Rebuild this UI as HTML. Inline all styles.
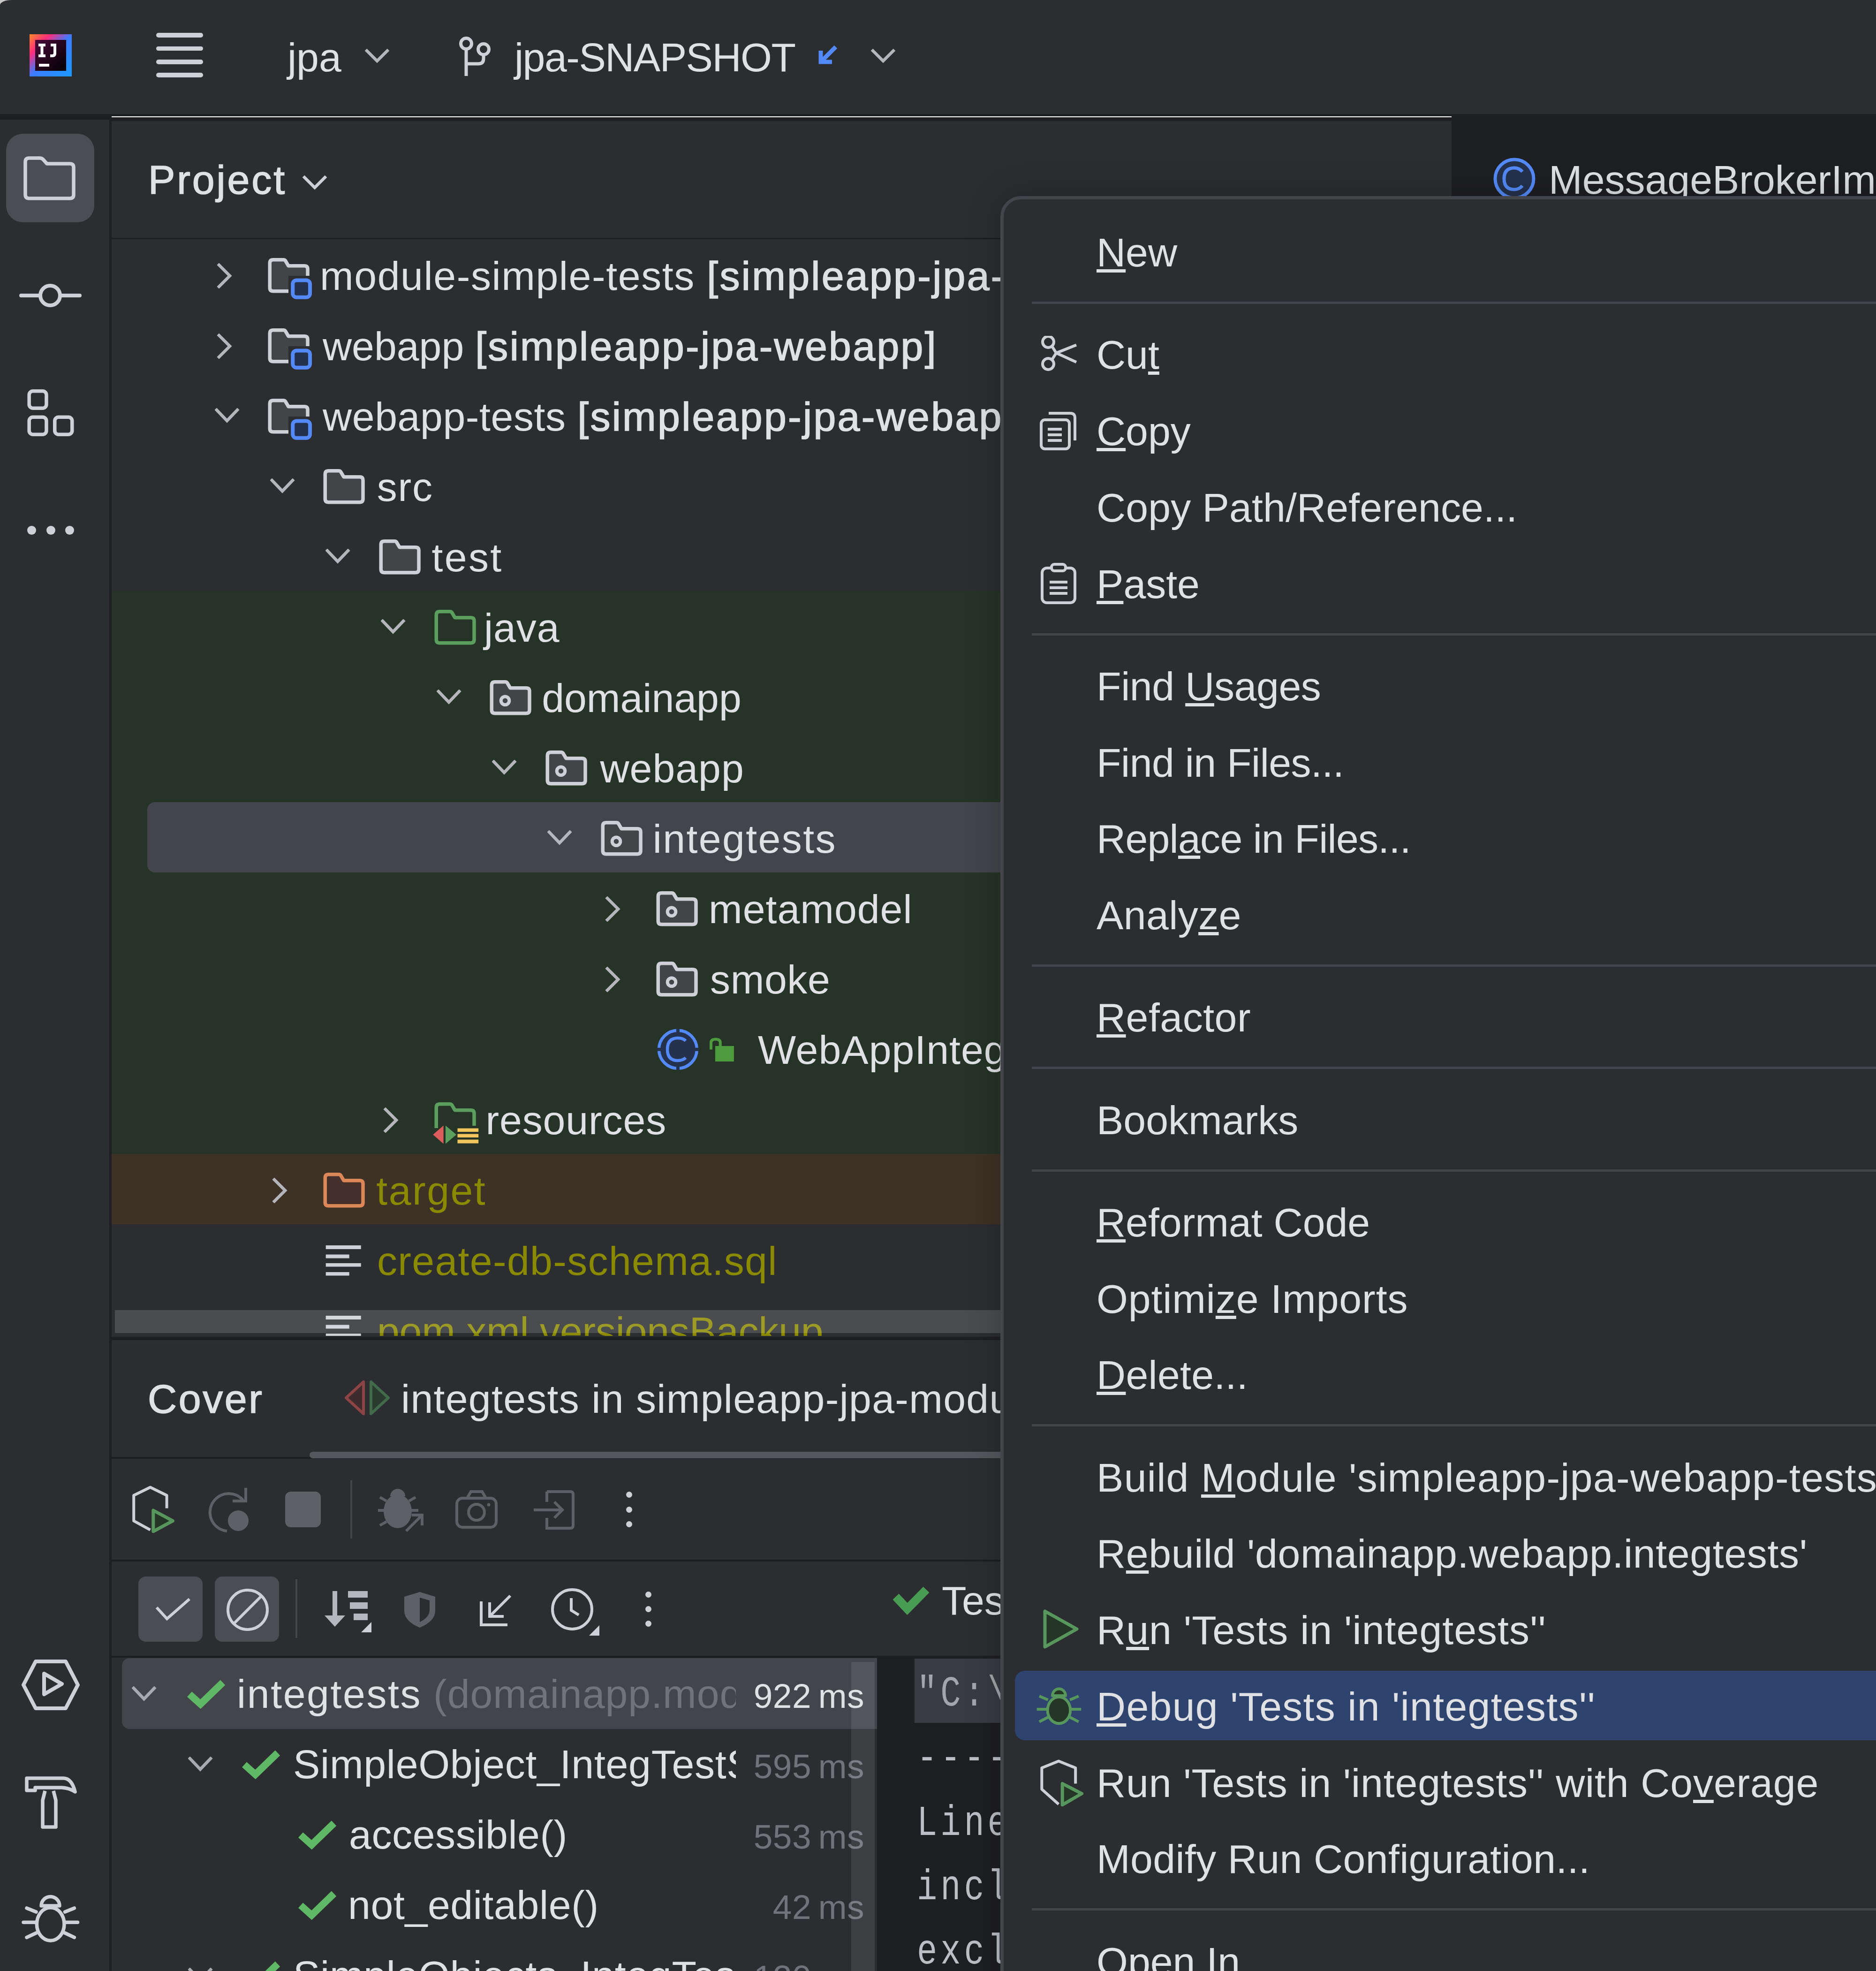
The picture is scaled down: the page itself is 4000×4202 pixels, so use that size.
<!DOCTYPE html><html><head><meta charset="utf-8"><style>
html,body{margin:0;padding:0;width:4000px;height:4202px;overflow:hidden;background:#2b2d30}
.a{position:absolute}
.t{position:absolute;white-space:pre;font-family:"Liberation Sans",sans-serif}
.t.m{font-family:"Liberation Mono",monospace}
.clip{position:absolute;overflow:hidden}
u{text-decoration:underline;text-decoration-thickness:7px;text-underline-offset:6px}
</style></head><body>
<div class="a" style="left:0px;top:0px;width:40px;height:40px;background:#c9c9c9;"></div>
<div class="a" style="left:0px;top:0px;width:4000px;height:243px;background:#2b2d30;border-top-left-radius:25px 11px"></div>
<svg class="a" style="left:63px;top:73px;" width="90" height="90" viewBox="0 0 90 90" fill="none"><defs><linearGradient id="lg1" x1="0" y1="0" x2="1" y2="1"><stop offset="0" stop-color="#ff8a2b"/><stop offset="0.25" stop-color="#fe2c7d"/><stop offset="0.5" stop-color="#3d7bfe"/><stop offset="1" stop-color="#1a9bff"/></linearGradient><linearGradient id="lg2" x1="0" y1="0" x2="1" y2="1"><stop offset="0" stop-color="#4a0a3a"/><stop offset="1" stop-color="#000"/></linearGradient></defs><rect x="0" y="0" width="90" height="90" fill="url(#lg1)"/><rect x="12" y="12" width="66" height="66" fill="url(#lg2)"/><rect x="20" y="63" width="22" height="6" fill="#fff"/><path d="M19 20h15v6h-4.5v17h4.5v6h-15v-6h4.5v-17h-4.5z" fill="#fff"/><path d="M45 20h12v21c0 5-3 8-8 8h-5v-6h4c2 0 3-1 3-3v-14h-6z" fill="#fff"/></svg>
<div class="a" style="left:333px;top:70px;width:100px;height:9.5px;background:#ced0d6;border-radius:5px"></div>
<div class="a" style="left:333px;top:98.5px;width:100px;height:9.5px;background:#ced0d6;border-radius:5px"></div>
<div class="a" style="left:333px;top:127px;width:100px;height:9.5px;background:#ced0d6;border-radius:5px"></div>
<div class="a" style="left:333px;top:155px;width:100px;height:9.5px;background:#ced0d6;border-radius:5px"></div>
<div class="t " style="left:613.0px;top:79.2px;font-size:86px;line-height:86px;color:#dfe1e5;">jpa</div>
<svg class="a" style="left:776px;top:100px;" width="56" height="36" viewBox="0 0 56 36" fill="none"><path d="M4 6 L28 30 L52 6" stroke="#b4b6bb" stroke-width="6.5" fill="none"/></svg>
<svg class="a" style="left:970px;top:76px;" width="80" height="92" viewBox="0 0 80 92" fill="none"><circle cx="24" cy="17" r="11.5" stroke="#ced0d6" stroke-width="7"/><circle cx="61" cy="29" r="11.5" stroke="#ced0d6" stroke-width="7"/><path d="M24 29 V86 M24 60 H50 Q61 60 61 49 V41" stroke="#ced0d6" stroke-width="7" fill="none"/></svg>
<div class="t " style="left:1097.0px;top:79.2px;font-size:86px;line-height:86px;color:#dfe1e5;letter-spacing:-1.5px">jpa-SNAPSHOT</div>
<svg class="a" style="left:1740px;top:92px;" width="50" height="50" viewBox="0 0 50 50" fill="none"><path d="M42 8 L12 38 M10 16 V40 H34" stroke="#548af7" stroke-width="9" fill="none"/></svg>
<svg class="a" style="left:1855px;top:100px;" width="56" height="36" viewBox="0 0 56 36" fill="none"><path d="M4 6 L28 30 L52 6" stroke="#b4b6bb" stroke-width="6.5" fill="none"/></svg>
<div class="a" style="left:0px;top:243px;width:4000px;height:15px;background:#1e1f22;"></div>
<div class="a" style="left:238px;top:247.5px;width:2857px;height:2.5px;background:#ffffff;"></div>
<div class="a" style="left:0px;top:255px;width:233px;height:3947px;background:#2b2d30;"></div>
<div class="a" style="left:233px;top:243px;width:5px;height:3959px;background:#1e1f22;"></div>
<div class="a" style="left:13px;top:285px;width:188px;height:189px;background:#4b4d53;border-radius:36px"></div>
<svg class="a" style="left:45px;top:325px;" width="125" height="110" viewBox="0 0 125 110" fill="none"><path d="M9 20 Q9 12 17 12 H40 Q44 12 47 15 L55 24 H104 Q112 24 112 32 V90 Q112 98 104 98 H17 Q9 98 9 90 Z" stroke="#ced0d6" stroke-width="7.5" stroke-linejoin="round"/></svg>
<svg class="a" style="left:40px;top:600px;" width="135" height="60" viewBox="0 0 135 60" fill="none"><circle cx="67" cy="30" r="21" stroke="#ced0d6" stroke-width="8"/><path d="M5 30 H46 M88 30 H130" stroke="#ced0d6" stroke-width="8" stroke-linecap="round"/></svg>
<svg class="a" style="left:52px;top:823px;" width="112" height="112" viewBox="0 0 112 112" fill="none"><rect x="10.15" y="10.75" width="36.8" height="36.5" rx="8" stroke="#ced0d6" stroke-width="7.5"/><rect x="10.15" y="66.35" width="36.8" height="36.9" rx="8" stroke="#ced0d6" stroke-width="7.5"/><rect x="64.75" y="66.35" width="37" height="36.9" rx="8" stroke="#ced0d6" stroke-width="7.5"/></svg>
<div class="a" style="left:57.5px;top:1120.5px;width:19px;height:19px;background:#ced0d6;border-radius:50%"></div>
<div class="a" style="left:98.5px;top:1120.5px;width:19px;height:19px;background:#ced0d6;border-radius:50%"></div>
<div class="a" style="left:138.5px;top:1120.5px;width:19px;height:19px;background:#ced0d6;border-radius:50%"></div>
<svg class="a" style="left:44px;top:3536px;" width="128" height="112" viewBox="0 0 128 112" fill="none"><path d="M32 6 H96 L122 56 L96 106 H32 L6 56 Z" stroke="#ced0d6" stroke-width="8" stroke-linejoin="round"/><path d="M50 32 L88 54 L50 76 Z" stroke="#ced0d6" stroke-width="8" stroke-linejoin="round"/></svg>
<svg class="a" style="left:40px;top:3770px;" width="140" height="140" viewBox="0 0 140 140" fill="none"><path d="M17 21 H95 Q113 21 120 50 Q108 42 92 41 H35 V47 H17 Z" stroke="#ced0d6" stroke-width="7.5" stroke-linejoin="round"/><path d="M56 48 L51 68 V125 H79 V68 L74 48" stroke="#ced0d6" stroke-width="7.5" stroke-linejoin="round"/></svg>
<svg class="a" style="left:40px;top:4030px;" width="140" height="120" viewBox="0 0 140 120" fill="none"><path d="M48 33 A19.5 19.5 0 0 1 87 33 Z" stroke="#ced0d6" stroke-width="7.5" stroke-linejoin="round"/><ellipse cx="67.7" cy="72" rx="29.3" ry="35.3" stroke="#ced0d6" stroke-width="7.5"/><path d="M17 38 L37 46 M10 68.3 H36 M17 100.3 L37 91 M118.4 38 L98.5 46 M125.5 68.3 H99.5 M118.4 100.3 L98.5 91" stroke="#ced0d6" stroke-width="7.5" stroke-linecap="round"/></svg>
<div class="a" style="left:238px;top:258px;width:2857px;height:2598px;background:#2b2d30;"></div>
<div class="t " style="left:316.0px;top:340.2px;font-size:86px;line-height:86px;color:#dfe1e5;-webkit-text-stroke:1.5px currentColor;letter-spacing:3.9px">Project</div>
<svg class="a" style="left:643px;top:370px;" width="56" height="36" viewBox="0 0 56 36" fill="none"><path d="M4 6 L28 30 L52 6" stroke="#ced0d6" stroke-width="6.5" fill="none"/></svg>
<div class="a" style="left:238px;top:507px;width:2857px;height:3px;background:#1e1f22;"></div>
<div class="clip" style="left:238px;top:510px;width:1895px;height:2338px">
<div class="a" style="left:0px;top:750.0px;width:1895px;height:150.0px;background:#253427;"></div>
<div class="a" style="left:0px;top:900.0px;width:1895px;height:150.0px;background:#253427;"></div>
<div class="a" style="left:0px;top:1050.0px;width:1895px;height:150.0px;background:#253427;"></div>
<div class="a" style="left:0px;top:1200.0px;width:1895px;height:150.0px;background:#253427;"></div>
<div class="a" style="left:0px;top:1350.0px;width:1895px;height:150.0px;background:#253427;"></div>
<div class="a" style="left:0px;top:1500.0px;width:1895px;height:150.0px;background:#253427;"></div>
<div class="a" style="left:0px;top:1650.0px;width:1895px;height:150.0px;background:#253427;"></div>
<div class="a" style="left:0px;top:1800.0px;width:1895px;height:150.0px;background:#253427;"></div>
<div class="a" style="left:0px;top:1950.0px;width:1895px;height:150.0px;background:#3e3125;"></div>
<div class="a" style="left:76px;top:1200.0px;width:1895px;height:149.5px;background:#43454a;border-radius:16px"></div>
<svg class="a" style="left:224.0px;top:51.0px;" width="36" height="54" viewBox="0 0 36 54" fill="none"><path d="M5 4 L28 27 L5 50" stroke="#b4b6bb" stroke-width="6.5" fill="none" stroke-linecap="square"/></svg>
<svg class="a" style="left:333.0px;top:0.0px;" width="100" height="150" viewBox="0 0 100 150" fill="none"><defs><clipPath id="cm0"><path d="M-5 0 H110 V78 H44 V150 H-5 Z"/></clipPath></defs><path clip-path="url(#cm0)" d="M4.25 51 Q4.25 43.75 11.5 43.75 H34 Q36 43.75 37 45 L44 56.75 H78 Q85 56.75 85 63.75 V103.5 Q85 110.75 77.75 110.75 H11.5 Q4.25 110.75 4.25 103.5 Z" fill="#434448" stroke="#ced0d6" stroke-width="7.5" stroke-linejoin="round"/><rect x="53.2" y="87.4" width="36.8" height="36.3" rx="8" fill="#25324d" stroke="#548af7" stroke-width="8"/></svg>
<div class="t " style="left:444.0px;top:35.2px;font-size:86px;line-height:86px;color:#dfe1e5;letter-spacing:1.6px"><span style="color:#dfe1e5">module-simple-tests </span><span style="-webkit-text-stroke:1.6px currentColor;letter-spacing:3.3px;color:#dfe1e5">[simpleapp-jpa-integtests]</span></div>
<svg class="a" style="left:224.0px;top:201.0px;" width="36" height="54" viewBox="0 0 36 54" fill="none"><path d="M5 4 L28 27 L5 50" stroke="#b4b6bb" stroke-width="6.5" fill="none" stroke-linecap="square"/></svg>
<svg class="a" style="left:333.0px;top:150.0px;" width="100" height="150" viewBox="0 0 100 150" fill="none"><defs><clipPath id="cm150"><path d="M-5 0 H110 V78 H44 V150 H-5 Z"/></clipPath></defs><path clip-path="url(#cm150)" d="M4.25 51 Q4.25 43.75 11.5 43.75 H34 Q36 43.75 37 45 L44 56.75 H78 Q85 56.75 85 63.75 V103.5 Q85 110.75 77.75 110.75 H11.5 Q4.25 110.75 4.25 103.5 Z" fill="#434448" stroke="#ced0d6" stroke-width="7.5" stroke-linejoin="round"/><rect x="53.2" y="87.4" width="36.8" height="36.3" rx="8" fill="#25324d" stroke="#548af7" stroke-width="8"/></svg>
<div class="t " style="left:450.0px;top:185.2px;font-size:86px;line-height:86px;color:#dfe1e5;letter-spacing:0px"><span style="color:#dfe1e5">webapp </span><span style="-webkit-text-stroke:1.6px currentColor;letter-spacing:3.3px;color:#dfe1e5">[simpleapp-jpa-webapp]</span></div>
<svg class="a" style="left:219.5px;top:359.5px;" width="54" height="36" viewBox="0 0 54 36" fill="none"><path d="M4 4 L26 27 L48 4" stroke="#b4b6bb" stroke-width="6.5" fill="none" stroke-linecap="square"/></svg>
<svg class="a" style="left:333.0px;top:300.0px;" width="100" height="150" viewBox="0 0 100 150" fill="none"><defs><clipPath id="cm300"><path d="M-5 0 H110 V78 H44 V150 H-5 Z"/></clipPath></defs><path clip-path="url(#cm300)" d="M4.25 51 Q4.25 43.75 11.5 43.75 H34 Q36 43.75 37 45 L44 56.75 H78 Q85 56.75 85 63.75 V103.5 Q85 110.75 77.75 110.75 H11.5 Q4.25 110.75 4.25 103.5 Z" fill="#434448" stroke="#ced0d6" stroke-width="7.5" stroke-linejoin="round"/><rect x="53.2" y="87.4" width="36.8" height="36.3" rx="8" fill="#25324d" stroke="#548af7" stroke-width="8"/></svg>
<div class="t " style="left:450.0px;top:335.2px;font-size:86px;line-height:86px;color:#dfe1e5;letter-spacing:0.6px"><span style="color:#dfe1e5">webapp-tests </span><span style="-webkit-text-stroke:1.6px currentColor;letter-spacing:3.3px;color:#dfe1e5">[simpleapp-jpa-webapp-tests]</span></div>
<svg class="a" style="left:337.79999999999995px;top:509.5px;" width="54" height="36" viewBox="0 0 54 36" fill="none"><path d="M4 4 L26 27 L48 4" stroke="#b4b6bb" stroke-width="6.5" fill="none" stroke-linecap="square"/></svg>
<svg class="a" style="left:451.29999999999995px;top:450.0px;" width="100" height="150" viewBox="0 0 100 150" fill="none"><path d="M4.25 51 Q4.25 43.75 11.5 43.75 H34 Q36 43.75 37 45 L44 56.75 H78 Q85 56.75 85 63.75 V103.5 Q85 110.75 77.75 110.75 H11.5 Q4.25 110.75 4.25 103.5 Z" fill="#434448" stroke="#ced0d6" stroke-width="7.5" stroke-linejoin="round"/></svg>
<div class="t " style="left:565.8px;top:485.2px;font-size:86px;line-height:86px;color:#dfe1e5;letter-spacing:1.75px"><span style="color:#dfe1e5">src</span></div>
<svg class="a" style="left:456.1px;top:659.5px;" width="54" height="36" viewBox="0 0 54 36" fill="none"><path d="M4 4 L26 27 L48 4" stroke="#b4b6bb" stroke-width="6.5" fill="none" stroke-linecap="square"/></svg>
<svg class="a" style="left:569.6px;top:600.0px;" width="100" height="150" viewBox="0 0 100 150" fill="none"><path d="M4.25 51 Q4.25 43.75 11.5 43.75 H34 Q36 43.75 37 45 L44 56.75 H78 Q85 56.75 85 63.75 V103.5 Q85 110.75 77.75 110.75 H11.5 Q4.25 110.75 4.25 103.5 Z" fill="#434448" stroke="#ced0d6" stroke-width="7.5" stroke-linejoin="round"/></svg>
<div class="t " style="left:682.6px;top:635.2px;font-size:86px;line-height:86px;color:#dfe1e5;letter-spacing:3.3px"><span style="color:#dfe1e5">test</span></div>
<svg class="a" style="left:574.4px;top:809.5px;" width="54" height="36" viewBox="0 0 54 36" fill="none"><path d="M4 4 L26 27 L48 4" stroke="#b4b6bb" stroke-width="6.5" fill="none" stroke-linecap="square"/></svg>
<svg class="a" style="left:687.9px;top:750.0px;" width="100" height="150" viewBox="0 0 100 150" fill="none"><path d="M4.25 51 Q4.25 43.75 11.5 43.75 H34 Q36 43.75 37 45 L44 56.75 H78 Q85 56.75 85 63.75 V103.5 Q85 110.75 77.75 110.75 H11.5 Q4.25 110.75 4.25 103.5 Z" fill="none" stroke="#5b9e5e" stroke-width="7.5" stroke-linejoin="round"/></svg>
<div class="t " style="left:793.9px;top:785.2px;font-size:86px;line-height:86px;color:#dfe1e5;letter-spacing:1px"><span style="color:#dfe1e5">java</span></div>
<svg class="a" style="left:692.7px;top:959.5px;" width="54" height="36" viewBox="0 0 54 36" fill="none"><path d="M4 4 L26 27 L48 4" stroke="#b4b6bb" stroke-width="6.5" fill="none" stroke-linecap="square"/></svg>
<svg class="a" style="left:806.2px;top:900.0px;" width="100" height="150" viewBox="0 0 100 150" fill="none"><path d="M4.25 51 Q4.25 43.75 11.5 43.75 H34 Q36 43.75 37 45 L44 56.75 H78 Q85 56.75 85 63.75 V103.5 Q85 110.75 77.75 110.75 H11.5 Q4.25 110.75 4.25 103.5 Z" fill="#434448" stroke="#ced0d6" stroke-width="7.5" stroke-linejoin="round"/><circle cx="33" cy="83.7" r="8.8" stroke="#ced0d6" stroke-width="7"/></svg>
<div class="t " style="left:917.2px;top:935.2px;font-size:86px;line-height:86px;color:#dfe1e5;letter-spacing:0px"><span style="color:#dfe1e5">domainapp</span></div>
<svg class="a" style="left:811.0px;top:1109.5px;" width="54" height="36" viewBox="0 0 54 36" fill="none"><path d="M4 4 L26 27 L48 4" stroke="#b4b6bb" stroke-width="6.5" fill="none" stroke-linecap="square"/></svg>
<svg class="a" style="left:924.5px;top:1050.0px;" width="100" height="150" viewBox="0 0 100 150" fill="none"><path d="M4.25 51 Q4.25 43.75 11.5 43.75 H34 Q36 43.75 37 45 L44 56.75 H78 Q85 56.75 85 63.75 V103.5 Q85 110.75 77.75 110.75 H11.5 Q4.25 110.75 4.25 103.5 Z" fill="#434448" stroke="#ced0d6" stroke-width="7.5" stroke-linejoin="round"/><circle cx="33" cy="83.7" r="8.8" stroke="#ced0d6" stroke-width="7"/></svg>
<div class="t " style="left:1041.5px;top:1085.2px;font-size:86px;line-height:86px;color:#dfe1e5;letter-spacing:1px"><span style="color:#dfe1e5">webapp</span></div>
<svg class="a" style="left:929.3px;top:1259.5px;" width="54" height="36" viewBox="0 0 54 36" fill="none"><path d="M4 4 L26 27 L48 4" stroke="#b4b6bb" stroke-width="6.5" fill="none" stroke-linecap="square"/></svg>
<svg class="a" style="left:1042.8px;top:1200.0px;" width="100" height="150" viewBox="0 0 100 150" fill="none"><path d="M4.25 51 Q4.25 43.75 11.5 43.75 H34 Q36 43.75 37 45 L44 56.75 H78 Q85 56.75 85 63.75 V103.5 Q85 110.75 77.75 110.75 H11.5 Q4.25 110.75 4.25 103.5 Z" fill="#434448" stroke="#ced0d6" stroke-width="7.5" stroke-linejoin="round"/><circle cx="33" cy="83.7" r="8.8" stroke="#ced0d6" stroke-width="7"/></svg>
<div class="t " style="left:1153.8px;top:1235.2px;font-size:86px;line-height:86px;color:#dfe1e5;letter-spacing:2.4px"><span style="color:#dfe1e5">integtests</span></div>
<svg class="a" style="left:1052.1px;top:1401.0px;" width="36" height="54" viewBox="0 0 36 54" fill="none"><path d="M5 4 L28 27 L5 50" stroke="#b4b6bb" stroke-width="6.5" fill="none" stroke-linecap="square"/></svg>
<svg class="a" style="left:1161.1px;top:1350.0px;" width="100" height="150" viewBox="0 0 100 150" fill="none"><path d="M4.25 51 Q4.25 43.75 11.5 43.75 H34 Q36 43.75 37 45 L44 56.75 H78 Q85 56.75 85 63.75 V103.5 Q85 110.75 77.75 110.75 H11.5 Q4.25 110.75 4.25 103.5 Z" fill="#434448" stroke="#ced0d6" stroke-width="7.5" stroke-linejoin="round"/><circle cx="33" cy="83.7" r="8.8" stroke="#ced0d6" stroke-width="7"/></svg>
<div class="t " style="left:1273.1px;top:1385.2px;font-size:86px;line-height:86px;color:#dfe1e5;letter-spacing:1px"><span style="color:#dfe1e5">metamodel</span></div>
<svg class="a" style="left:1052.1px;top:1551.0px;" width="36" height="54" viewBox="0 0 36 54" fill="none"><path d="M5 4 L28 27 L5 50" stroke="#b4b6bb" stroke-width="6.5" fill="none" stroke-linecap="square"/></svg>
<svg class="a" style="left:1161.1px;top:1500.0px;" width="100" height="150" viewBox="0 0 100 150" fill="none"><path d="M4.25 51 Q4.25 43.75 11.5 43.75 H34 Q36 43.75 37 45 L44 56.75 H78 Q85 56.75 85 63.75 V103.5 Q85 110.75 77.75 110.75 H11.5 Q4.25 110.75 4.25 103.5 Z" fill="#434448" stroke="#ced0d6" stroke-width="7.5" stroke-linejoin="round"/><circle cx="33" cy="83.7" r="8.8" stroke="#ced0d6" stroke-width="7"/></svg>
<div class="t " style="left:1276.1px;top:1535.2px;font-size:86px;line-height:86px;color:#dfe1e5;letter-spacing:0.6px"><span style="color:#dfe1e5">smoke</span></div>
<svg class="a" style="left:1161.1px;top:1650.0px;" width="180" height="150" viewBox="0 0 180 150" fill="none"><circle cx="46.4" cy="77.2" r="40.5" fill="#25324d" stroke="#548af7" stroke-width="6.5"/><path d="M46.4 33 V42 M46.4 112 V121 M2 77.2 H11 M81 77.2 H90" stroke="#25324d" stroke-width="7"/><path d="M63 59 Q57 53 46.4 53 Q24 53 24 77.2 Q24 101 46.4 101 Q57 101 63 95" stroke="#548af7" stroke-width="6.5" fill="none"/><path d="M117 77.5 V63 Q117 55.5 126.9 55.5 Q136.8 55.5 136.8 63 V72" stroke="#4e9a3e" stroke-width="6" fill="none"/><rect x="125.9" y="70" width="40" height="33" fill="#4e9a3e"/></svg>
<div class="t " style="left:1378.0px;top:1685.2px;font-size:86px;line-height:86px;color:#dfe1e5;letter-spacing:1px"><span style="color:#dfe1e5">WebAppIntegTest</span></div>
<svg class="a" style="left:578.9px;top:1851.0px;" width="36" height="54" viewBox="0 0 36 54" fill="none"><path d="M5 4 L28 27 L5 50" stroke="#b4b6bb" stroke-width="6.5" fill="none" stroke-linecap="square"/></svg>
<svg class="a" style="left:682.9px;top:1800.0px;" width="110" height="150" viewBox="0 0 110 150" fill="none"><g transform="translate(5,0)"><path d="M4.25 95 V51 Q4.25 43.75 11.5 43.75 H34 Q36 43.75 37 45 L44 56.75 H78 Q85 56.75 85 63.75 V90" fill="none" stroke="#5b9e5e" stroke-width="7.5" stroke-linejoin="round"/><path d="M19.6 89.5 V128.4 L-2.8 109 Z" fill="#db5c5c"/><path d="M24 89.5 V128.4 L47 109 Z" fill="#5b9e5e"/><rect x="49.5" y="95.5" width="44.7" height="7.5" fill="#f2c55c"/><rect x="49.5" y="107.5" width="44.7" height="7.5" fill="#f2c55c"/><rect x="49.5" y="119.5" width="44.7" height="8" fill="#f2c55c"/></g></svg>
<div class="t " style="left:797.4px;top:1835.2px;font-size:86px;line-height:86px;color:#dfe1e5;letter-spacing:0.9px"><span style="color:#dfe1e5">resources</span></div>
<svg class="a" style="left:342.29999999999995px;top:2001.0px;" width="36" height="54" viewBox="0 0 36 54" fill="none"><path d="M5 4 L28 27 L5 50" stroke="#b4b6bb" stroke-width="6.5" fill="none" stroke-linecap="square"/></svg>
<svg class="a" style="left:451.29999999999995px;top:1950.0px;" width="100" height="150" viewBox="0 0 100 150" fill="none"><path d="M4.25 51 Q4.25 43.75 11.5 43.75 H34 Q36 43.75 37 45 L44 56.75 H78 Q85 56.75 85 63.75 V103.5 Q85 110.75 77.75 110.75 H11.5 Q4.25 110.75 4.25 103.5 Z" fill="#45302b" stroke="#dc8758" stroke-width="7.5" stroke-linejoin="round"/></svg>
<div class="t " style="left:564.3px;top:1985.2px;font-size:86px;line-height:86px;color:#dfe1e5;letter-spacing:2.5px"><span style="color:#8a8a00">target</span></div>
<svg class="a" style="left:451.29999999999995px;top:2100.0px;" width="100" height="150" viewBox="0 0 100 150" fill="none"><rect x="5.7" y="45" width="75" height="8" fill="#ced0d6"/><rect x="5.7" y="64.5" width="50" height="8" fill="#ced0d6"/><rect x="5.7" y="83" width="75" height="7.5" fill="#ced0d6"/><rect x="5.7" y="102" width="50" height="7.5" fill="#ced0d6"/></svg>
<div class="t " style="left:565.9px;top:2135.2px;font-size:86px;line-height:86px;color:#dfe1e5;letter-spacing:1.34px"><span style="color:#8a8a00">create-db-schema.sql</span></div>
<svg class="a" style="left:451.29999999999995px;top:2250.0px;" width="100" height="150" viewBox="0 0 100 150" fill="none"><rect x="5.7" y="45" width="75" height="8" fill="#ced0d6"/><rect x="5.7" y="64.5" width="50" height="8" fill="#ced0d6"/><rect x="5.7" y="83" width="75" height="7.5" fill="#ced0d6"/><rect x="5.7" y="102" width="50" height="7.5" fill="#ced0d6"/></svg>
<div class="t " style="left:565.9px;top:2285.2px;font-size:86px;line-height:86px;color:#dfe1e5;letter-spacing:-0.2px"><span style="color:#8a8a00">pom.xml.versionsBackup</span></div>
</div>
<div class="a" style="left:245px;top:2793px;width:1888px;height:49px;background:rgba(255,255,255,0.15);"></div>
<div class="a" style="left:238px;top:2850px;width:2857px;height:7px;background:#1e1f22;"></div>
<div class="a" style="left:3095px;top:258px;width:905px;height:160px;background:#1e1f22;"></div>
<div class="clip" style="left:3095px;top:258px;width:905px;height:162px">
<svg class="a" style="left:89px;top:78px;" width="90" height="90" viewBox="0 0 90 90" fill="none"><circle cx="45" cy="45" r="41" fill="#25324d" stroke="#548af7" stroke-width="7"/><path d="M62 30 Q55 22 45 22 Q23 22 23 45 Q23 68 45 68 Q55 68 62 60" stroke="#548af7" stroke-width="7" fill="none"/></svg>
<div class="t " style="left:207.0px;top:82.2px;font-size:86px;line-height:86px;color:#dfe1e5;">MessageBrokerImpl</div>
</div>
<div class="a" style="left:238px;top:2857px;width:1895px;height:1345px;background:#2b2d30;"></div>
<div class="t " style="left:315.0px;top:2939.2px;font-size:86px;line-height:86px;color:#dfe1e5;-webkit-text-stroke:1.5px currentColor;letter-spacing:3.6px">Cover</div>
<svg class="a" style="left:734px;top:2942px;" width="98" height="76" viewBox="0 0 98 76" fill="none"><path d="M41 4 V72 L4 38 Z" fill="#3d2b2d" stroke="#8c4446" stroke-width="6" stroke-linejoin="round"/><path d="M57 4 V72 L94 38 Z" fill="#2b3a2f" stroke="#416a4a" stroke-width="6" stroke-linejoin="round"/></svg>
<div class="t " style="left:855.0px;top:2939.2px;font-size:86px;line-height:86px;color:#dfe1e5;letter-spacing:1.3px">integtests in simpleapp-jpa-module-simple</div>
<div class="a" style="left:238px;top:3106px;width:1895px;height:4px;background:#1e1f22;"></div>
<div class="a" style="left:660px;top:3095px;width:1480px;height:14px;background:#55575c;border-radius:7px"></div>
<svg class="a" style="left:276px;top:3160px;" width="100" height="110" viewBox="0 0 100 110" fill="none"><path d="M44.4 101.6 L9.2 82.4 V28 L44.4 10.7 L79.6 28 V55.5" stroke="#ced0d6" stroke-width="6" fill="none" stroke-linejoin="round"/><path d="M50.8 60 V104.8 L92.4 82.4 Z" fill="#253627" stroke="#57965c" stroke-width="7" stroke-linejoin="round"/></svg>
<svg class="a" style="left:442px;top:3168px;" width="96" height="104" viewBox="0 0 96 104" fill="none"><path d="M76 30 A40 40 0 1 0 42 96" stroke="#5e6066" stroke-width="6" fill="none"/><path d="M82 4 V32 H54" stroke="#5e6066" stroke-width="6" fill="none"/><circle cx="66" cy="74" r="22" fill="#5e6066"/></svg>
<div class="a" style="left:608px;top:3180px;width:76px;height:76px;background:#5e6066;border-radius:12px"></div>
<div class="a" style="left:747px;top:3156px;width:4px;height:124px;background:#43454a;"></div>
<svg class="a" style="left:802px;top:3166px;" width="104" height="104" viewBox="0 0 104 104" fill="none"><path d="M30 24 A16 16 0 0 1 62 24 Z" fill="#5e6066"/><ellipse cx="46" cy="56" rx="30" ry="36" fill="#5e6066"/><path d="M4 54 H18 M74 54 H90 M8 26 L22 34 M84 26 L70 34 M8 86 L22 78" stroke="#5e6066" stroke-width="6"/><path d="M64 98 L96 66 M76 64 H98 V86" stroke="#5e6066" stroke-width="6" fill="none"/></svg>
<svg class="a" style="left:970px;top:3176px;" width="92" height="84" viewBox="0 0 92 84" fill="none"><rect x="4" y="18" width="84" height="62" rx="12" stroke="#5e6066" stroke-width="6"/><path d="M26 18 L34 4 H58 L66 18" stroke="#5e6066" stroke-width="6" fill="none"/><circle cx="46" cy="48" r="17" stroke="#5e6066" stroke-width="6"/><circle cx="72" cy="32" r="3.5" fill="#5e6066"/></svg>
<svg class="a" style="left:1136px;top:3176px;" width="90" height="86" viewBox="0 0 90 86" fill="none"><path d="M30 4 H80 Q86 4 86 10 V76 Q86 82 80 82 H30 V60 M30 26 V4" stroke="#5e6066" stroke-width="6" fill="none"/><path d="M2 43 H62 M46 26 L63 43 L46 60" stroke="#5e6066" stroke-width="6" fill="none"/></svg>
<div class="a" style="left:1335px;top:3179.5px;width:13px;height:13px;background:#ced0d6;border-radius:50%"></div>
<div class="a" style="left:1335px;top:3211.5px;width:13px;height:13px;background:#ced0d6;border-radius:50%"></div>
<div class="a" style="left:1335px;top:3242.5px;width:13px;height:13px;background:#ced0d6;border-radius:50%"></div>
<div class="a" style="left:238px;top:3325px;width:1895px;height:4px;background:#1e1f22;"></div>
<div class="a" style="left:295px;top:3361px;width:137px;height:139px;background:#4b4d53;border-radius:16px"></div>
<svg class="a" style="left:330px;top:3405px;" width="78" height="54" viewBox="0 0 78 54" fill="none"><path d="M4 22 L26 46 L74 4" stroke="#ced0d6" stroke-width="6" fill="none"/></svg>
<div class="a" style="left:458px;top:3361px;width:137px;height:139px;background:#4b4d53;border-radius:16px"></div>
<svg class="a" style="left:476px;top:3380px;" width="104" height="104" viewBox="0 0 104 104" fill="none"><circle cx="52" cy="52" r="42" stroke="#ced0d6" stroke-width="6"/><path d="M24 80 L80 24" stroke="#ced0d6" stroke-width="6"/></svg>
<div class="a" style="left:630px;top:3367px;width:4px;height:125px;background:#43454a;"></div>
<svg class="a" style="left:688px;top:3388px;" width="106" height="94" viewBox="0 0 106 94" fill="none"><path d="M26 4 V70" stroke="#b5b7bc" stroke-width="10"/><path d="M4 56 H48 L26 80 Z" fill="#b5b7bc"/><rect x="54" y="4" width="42" height="14" fill="#b5b7bc"/><rect x="58" y="28" width="38" height="14" fill="#b5b7bc"/><rect x="66" y="52" width="30" height="14" fill="#b5b7bc"/><path d="M104 92 V70 L82 92 Z" fill="#ced0d6"/></svg>
<svg class="a" style="left:858px;top:3390px;" width="74" height="82" viewBox="0 0 74 82" fill="none"><path d="M37 4 L70 14 V44 Q70 66 37 80 Q4 66 4 44 V14 Z" fill="#5e6066"/><path d="M37 16 V68 Q58 58 58 42 V22 Z" fill="#2b2d30"/></svg>
<svg class="a" style="left:1020px;top:3394px;" width="76" height="76" viewBox="0 0 76 76" fill="none"><path d="M6 20 V70 H62" stroke="#ced0d6" stroke-width="6" fill="none"/><path d="M68 8 L26 50 M24 22 V52 H54" stroke="#ced0d6" stroke-width="6" fill="none"/></svg>
<svg class="a" style="left:1172px;top:3385px;" width="110" height="106" viewBox="0 0 110 106" fill="none"><circle cx="48" cy="46" r="42" stroke="#ced0d6" stroke-width="6"/><path d="M46 22 V48 L62 58" stroke="#ced0d6" stroke-width="6" fill="none"/><path d="M106 102 V80 L84 102 Z" fill="#ced0d6"/></svg>
<div class="a" style="left:1376px;top:3392.5px;width:13px;height:13px;background:#ced0d6;border-radius:50%"></div>
<div class="a" style="left:1376px;top:3423.5px;width:13px;height:13px;background:#ced0d6;border-radius:50%"></div>
<div class="a" style="left:1376px;top:3454.5px;width:13px;height:13px;background:#ced0d6;border-radius:50%"></div>
<svg class="a" style="left:1895px;top:3370px;" width="90" height="80" viewBox="0 0 90 80" fill="none"><path d="M15 34 L39.5 60 L80 19" stroke="#499c54" stroke-width="18" fill="none" stroke-linecap="butt" stroke-linejoin="miter"/></svg>
<div class="t " style="left:2008.0px;top:3369.2px;font-size:86px;line-height:86px;color:#dfe1e5;">Tests passed: 5</div>
<div class="a" style="left:238px;top:3530px;width:1895px;height:4px;background:#1e1f22;"></div>
<div class="clip" style="left:238px;top:3534px;width:1632px;height:668px">
<div class="a" style="left:22px;top:1px;width:1632px;height:151px;background:#43454a;border-radius:16px"></div>
<svg class="a" style="left:43px;top:61px;" width="54" height="36" viewBox="0 0 54 36" fill="none"><path d="M4 4 L26 27 L48 4" stroke="#a8aaaf" stroke-width="6.5" fill="none" stroke-linecap="square"/></svg>
<svg class="a" style="left:160px;top:37px;" width="84" height="84" viewBox="0 0 84 84" fill="none"><path d="M6 41 L29.5 62 L77 16" stroke="#5fb865" stroke-width="15" fill="none" stroke-linecap="butt" stroke-linejoin="miter"/></svg>
<div class="clip" style="left:267px;top:-1px;width:1064px;height:150px">
<div class="t " style="left:0.0px;top:35.2px;font-size:86px;line-height:86px;color:#dfe1e5;"><span style="letter-spacing:2.6px">integtests</span><span style="color:#6f737a;letter-spacing:1px"> (domainapp.modules.simple.integtests)</span></div>
</div>
<div class="t" style="right:27px;top:45.2px;font-size:73px;line-height:73px;color:#dfe1e5;letter-spacing:0.5px">922<span style="letter-spacing:0">&#8201;</span>ms</div>
<svg class="a" style="left:163px;top:211px;" width="54" height="36" viewBox="0 0 54 36" fill="none"><path d="M4 4 L26 27 L48 4" stroke="#a8aaaf" stroke-width="6.5" fill="none" stroke-linecap="square"/></svg>
<svg class="a" style="left:277px;top:187px;" width="84" height="84" viewBox="0 0 84 84" fill="none"><path d="M6 41 L29.5 62 L77 16" stroke="#5fb865" stroke-width="15" fill="none" stroke-linecap="butt" stroke-linejoin="miter"/></svg>
<div class="clip" style="left:387px;top:149px;width:944px;height:150px">
<div class="t " style="left:0.0px;top:35.2px;font-size:86px;line-height:86px;color:#dfe1e5;"><span style="letter-spacing:0.73px">SimpleObject_IntegTestSuite</span><span style="color:#6f737a;letter-spacing:1px"></span></div>
</div>
<div class="t" style="right:27px;top:195.2px;font-size:73px;line-height:73px;color:#6f737a;letter-spacing:0.5px">595<span style="letter-spacing:0">&#8201;</span>ms</div>
<svg class="a" style="left:397px;top:337px;" width="84" height="84" viewBox="0 0 84 84" fill="none"><path d="M6 41 L29.5 62 L77 16" stroke="#5fb865" stroke-width="15" fill="none" stroke-linecap="butt" stroke-linejoin="miter"/></svg>
<div class="clip" style="left:506px;top:299px;width:825px;height:150px">
<div class="t " style="left:0.0px;top:35.2px;font-size:86px;line-height:86px;color:#dfe1e5;"><span style="letter-spacing:0.6px">accessible()</span><span style="color:#6f737a;letter-spacing:1px"></span></div>
</div>
<div class="t" style="right:27px;top:345.2px;font-size:73px;line-height:73px;color:#6f737a;letter-spacing:0.5px">553<span style="letter-spacing:0">&#8201;</span>ms</div>
<svg class="a" style="left:397px;top:487px;" width="84" height="84" viewBox="0 0 84 84" fill="none"><path d="M6 41 L29.5 62 L77 16" stroke="#5fb865" stroke-width="15" fill="none" stroke-linecap="butt" stroke-linejoin="miter"/></svg>
<div class="clip" style="left:504px;top:449px;width:827px;height:150px">
<div class="t " style="left:0.0px;top:35.2px;font-size:86px;line-height:86px;color:#dfe1e5;"><span style="letter-spacing:0.63px">not_editable()</span><span style="color:#6f737a;letter-spacing:1px"></span></div>
</div>
<div class="t" style="right:27px;top:495.2px;font-size:73px;line-height:73px;color:#6f737a;letter-spacing:0.5px">42<span style="letter-spacing:0">&#8201;</span>ms</div>
<svg class="a" style="left:163px;top:661px;" width="54" height="36" viewBox="0 0 54 36" fill="none"><path d="M4 4 L26 27 L48 4" stroke="#a8aaaf" stroke-width="6.5" fill="none" stroke-linecap="square"/></svg>
<svg class="a" style="left:277px;top:637px;" width="84" height="84" viewBox="0 0 84 84" fill="none"><path d="M6 41 L29.5 62 L77 16" stroke="#5fb865" stroke-width="15" fill="none" stroke-linecap="butt" stroke-linejoin="miter"/></svg>
<div class="clip" style="left:387px;top:599px;width:944px;height:150px">
<div class="t " style="left:0.0px;top:35.2px;font-size:86px;line-height:86px;color:#dfe1e5;"><span style="letter-spacing:0.73px">SimpleObjects_IntegTestSuite</span><span style="color:#6f737a;letter-spacing:1px"></span></div>
</div>
<div class="t" style="right:27px;top:645.2px;font-size:73px;line-height:73px;color:#6f737a;letter-spacing:0.5px">120<span style="letter-spacing:0">&#8201;</span>ms</div>
<div class="a" style="left:1577px;top:9px;width:50px;height:700px;background:rgba(255,255,255,0.09);"></div>
</div>
<div class="a" style="left:1870px;top:3534px;width:263px;height:668px;background:#1e1f22;"></div>
<div class="a" style="left:1950px;top:3536px;width:183px;height:137px;background:#393b40;"></div>
<div class="clip" style="left:1870px;top:3534px;width:263px;height:668px">
<div class="t m" style="left:85.0px;top:33.1px;font-size:90px;line-height:90px;color:#a3a5aa;letter-spacing:8.75px;transform:scaleX(0.8);transform-origin:0 0">&quot;C:\Program Files\Java</div>
<div class="t m" style="left:85.0px;top:171.1px;font-size:90px;line-height:90px;color:#bcbec4;letter-spacing:8.75px;transform:scaleX(0.8);transform-origin:0 0">-----------------</div>
<div class="t m" style="left:85.0px;top:309.1px;font-size:90px;line-height:90px;color:#bcbec4;letter-spacing:8.75px;transform:scaleX(0.8);transform-origin:0 0">Line coverage</div>
<div class="t m" style="left:85.0px;top:446.1px;font-size:90px;line-height:90px;color:#bcbec4;letter-spacing:8.75px;transform:scaleX(0.8);transform-origin:0 0">include</div>
<div class="t m" style="left:85.0px;top:583.1px;font-size:90px;line-height:90px;color:#bcbec4;letter-spacing:8.75px;transform:scaleX(0.8);transform-origin:0 0">exclude</div>
</div>
<div class="a" style="left:2133px;top:418px;width:2100px;height:4000px;background:#2b2d30;border:7px solid #43454a;border-radius:44px;box-sizing:border-box;box-shadow:0 0 70px 6px rgba(0,0,0,0.2)"></div>
<div class="t " style="left:2338.0px;top:495.2px;font-size:86px;line-height:86px;color:#dfe1e5;"><u>N</u>ew</div>
<div class="a" style="left:2200px;top:643.0px;width:1800px;height:5px;background:#43454a;"></div>
<svg class="a" style="left:2216px;top:716.25px;" width="84" height="80" viewBox="0 0 84 80" fill="none"><circle cx="19" cy="13" r="12" stroke="#ced0d6" stroke-width="6"/><circle cx="19" cy="60" r="12" stroke="#ced0d6" stroke-width="6"/><path d="M27 22 L36 36.6 L27 51 M36 36.6 L79 19.5 M36 36.6 L79 56" stroke="#ced0d6" stroke-width="6" fill="none"/></svg>
<div class="t " style="left:2338.0px;top:713.4px;font-size:86px;line-height:86px;color:#dfe1e5;">Cu<u>t</u></div>
<svg class="a" style="left:2216px;top:877.0px;" width="84" height="84" viewBox="0 0 84 84" fill="none"><rect x="4" y="18" width="60" height="62" rx="8" stroke="#ced0d6" stroke-width="6"/><path d="M20 4 H66 Q76 4 76 14 V62" stroke="#ced0d6" stroke-width="6" fill="none"/><path d="M18 38 H48 M18 50 H48 M18 62 H48" stroke="#ced0d6" stroke-width="6"/></svg>
<div class="t " style="left:2338.0px;top:876.2px;font-size:86px;line-height:86px;color:#dfe1e5;"><u>C</u>opy</div>
<div class="t " style="left:2338.0px;top:1038.9px;font-size:86px;line-height:86px;color:#dfe1e5;letter-spacing:0.15px">Copy Path/Reference...</div>
<svg class="a" style="left:2216px;top:1198.5px;" width="84" height="90" viewBox="0 0 84 90" fill="none"><rect x="6" y="12" width="70" height="74" rx="10" stroke="#ced0d6" stroke-width="6"/><rect x="26" y="4" width="30" height="14" rx="6" fill="#2b2d30" stroke="#ced0d6" stroke-width="6"/><path d="M22 42 H60 M22 54 H60 M22 66 H60" stroke="#ced0d6" stroke-width="6"/></svg>
<div class="t " style="left:2338.0px;top:1201.7px;font-size:86px;line-height:86px;color:#dfe1e5;"><u>P</u>aste</div>
<div class="a" style="left:2200px;top:1349.5px;width:1800px;height:5px;background:#43454a;"></div>
<div class="t " style="left:2338.0px;top:1419.9px;font-size:86px;line-height:86px;color:#dfe1e5;letter-spacing:-0.4px">Find <u>U</u>sages</div>
<div class="t " style="left:2338.0px;top:1582.7px;font-size:86px;line-height:86px;color:#dfe1e5;letter-spacing:-0.5px">Find in Files...</div>
<div class="t " style="left:2338.0px;top:1745.4px;font-size:86px;line-height:86px;color:#dfe1e5;letter-spacing:-0.72px">Repl<u>a</u>ce in Files...</div>
<div class="t " style="left:2338.0px;top:1908.2px;font-size:86px;line-height:86px;color:#dfe1e5;letter-spacing:0.4px">Analy<u>z</u>e</div>
<div class="a" style="left:2200px;top:2056.0px;width:1800px;height:5px;background:#43454a;"></div>
<div class="t " style="left:2338.0px;top:2126.4px;font-size:86px;line-height:86px;color:#dfe1e5;letter-spacing:0.5px"><u>R</u>efactor</div>
<div class="a" style="left:2200px;top:2274.25px;width:1800px;height:5px;background:#43454a;"></div>
<div class="t " style="left:2338.0px;top:2344.7px;font-size:86px;line-height:86px;color:#dfe1e5;">Bookmarks</div>
<div class="a" style="left:2200px;top:2492.5px;width:1800px;height:5px;background:#43454a;"></div>
<div class="t " style="left:2338.0px;top:2562.9px;font-size:86px;line-height:86px;color:#dfe1e5;"><u>R</u>eformat Code</div>
<div class="t " style="left:2338.0px;top:2725.7px;font-size:86px;line-height:86px;color:#dfe1e5;letter-spacing:0.9px">Optimi<u>z</u>e Imports</div>
<div class="t " style="left:2338.0px;top:2888.4px;font-size:86px;line-height:86px;color:#dfe1e5;letter-spacing:0.3px"><u>D</u>elete...</div>
<div class="a" style="left:2200px;top:3036.25px;width:1800px;height:5px;background:#43454a;"></div>
<div class="t " style="left:2338.0px;top:3106.7px;font-size:86px;line-height:86px;color:#dfe1e5;letter-spacing:1.3px">Build <u>M</u>odule 'simpleapp-jpa-webapp-tests'</div>
<div class="t " style="left:2338.0px;top:3269.4px;font-size:86px;line-height:86px;color:#dfe1e5;letter-spacing:0.67px">R<u>e</u>build 'domainapp.webapp.integtests'</div>
<svg class="a" style="left:2220px;top:3429.0px;" width="82" height="88" viewBox="0 0 82 88" fill="none"><path d="M8 6 V82 L76 44 Z" fill="#253627" stroke="#57965c" stroke-width="7" stroke-linejoin="round"/></svg>
<div class="t " style="left:2338.0px;top:3432.2px;font-size:86px;line-height:86px;color:#dfe1e5;letter-spacing:1.04px">R<u>u</u>n 'Tests in 'integtests''</div>
<div class="a" style="left:2164px;top:3562px;width:1900px;height:148px;background:#2e436e;border-radius:21px"></div>
<svg class="a" style="left:2200px;top:3590px;" width="120" height="100" viewBox="0 0 120 100" fill="none"><path d="M44 25 A14 14.5 0 0 1 72 25 Z" fill="#253627" stroke="#57965c" stroke-width="6" stroke-linejoin="round"/><ellipse cx="57.9" cy="56" rx="24.3" ry="28.3" fill="#253627" stroke="#57965c" stroke-width="6"/><path d="M16 26 L34.6 34 M10.6 54 H32 M16 80.6 L34.6 71 M99.8 26 L81.2 34 M105.2 54 H84 M99.8 80.6 L81.2 71" stroke="#57965c" stroke-width="6"/></svg>
<div class="t " style="left:2338.0px;top:3594.9px;font-size:86px;line-height:86px;color:#dfe1e5;letter-spacing:1.3px"><u>D</u>ebug 'Tests in 'integtests''</div>
<svg class="a" style="left:2210px;top:3745px;" width="110" height="110" viewBox="0 0 110 110" fill="none"><path d="M47.2 101.5 L11.3 69.5 V24 L47.2 9.5 L83.2 24 V57.5" stroke="#ced0d6" stroke-width="6" fill="none" stroke-linejoin="round"/><path d="M55.2 57.5 V102.8 L96.6 78.8 Z" fill="#253627" stroke="#57965c" stroke-width="7" stroke-linejoin="round"/></svg>
<div class="t " style="left:2338.0px;top:3757.7px;font-size:86px;line-height:86px;color:#dfe1e5;letter-spacing:0.87px">Run 'Tests in 'integtests'' with Co<u>v</u>erage</div>
<div class="t " style="left:2338.0px;top:3920.4px;font-size:86px;line-height:86px;color:#dfe1e5;letter-spacing:0.38px">Modify Run Configuration...</div>
<div class="a" style="left:2200px;top:4068.25px;width:1800px;height:5px;background:#43454a;"></div>
<div class="t " style="left:2338.0px;top:4138.7px;font-size:86px;line-height:86px;color:#dfe1e5;">Open In</div>
</body></html>
